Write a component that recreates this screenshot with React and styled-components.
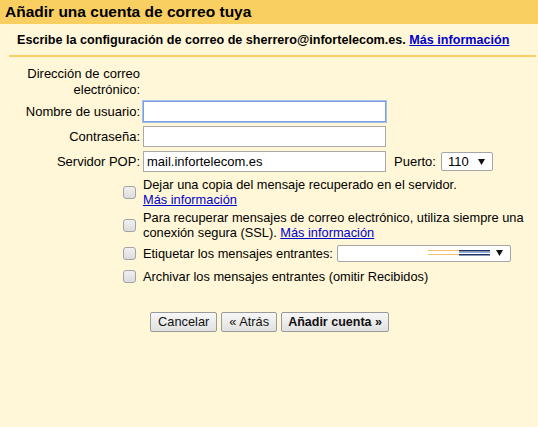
import React from "react";
import styled, { createGlobalStyle } from "styled-components";

const Global = createGlobalStyle`
  html, body { margin: 0; padding: 0; }
  body {
    background: #fff7d7;
    font-family: "Liberation Sans", Arial, sans-serif;
    font-size: 13px;
    color: #000;
  }
`;

const Page = styled.div`
  width: 538px;
  min-height: 427px;
  background: #fff7d7;
`;

const TitleBar = styled.div`
  height: 24px;
  background: #f9cf62;
  padding-left: 5px;
  font-weight: bold;
  font-size: 15.5px;
  line-height: 23px;
  color: #000;
`;

const SubHeader = styled.div`
  margin: 0 2px 0 9px;
  padding: 9px 0 7px 8px;
  border-bottom: 2px solid #f9cf62;
  font-weight: bold;
  font-size: 12.6px;
  line-height: 15px;
  white-space: nowrap;
`;

const Link = styled.a`
  color: #0000cc;
  text-decoration: underline;
  cursor: pointer;
`;

const FormGrid = styled.div`
  display: grid;
  grid-template-columns: 121px 1fr;
  row-gap: ${(p) => p.$gap}px;
  padding: ${(p) => p.$top}px 8px 0 22px;
`;

const Label = styled.div`
  text-align: right;
  padding-right: 3px;
  line-height: ${(p) => (p.$multi ? "15.5px" : "21px")};
`;

const Field = styled.div`
  display: flex;
  align-items: center;
  height: ${(p) => (p.$empty ? "auto" : "21px")};
`;

const TextInput = styled.input`
  box-sizing: border-box;
  width: 243px;
  height: 21px;
  margin: 0;
  padding: 1px 3px;
  border: 1px solid ${(p) => (p.$focused ? "#7b9fe0" : "#a9a9a9")};
  box-shadow: ${(p) => (p.$focused ? "0 0 0 1px #a7c1ee" : "none")};
  background: #fff;
  font-family: "Liberation Sans", Arial, sans-serif;
  font-size: 13px;
  color: #000;
  outline: none;
`;

const InlineLabel = styled.span`
  margin-left: 8px;
`;

const FakeSelect = styled.div`
  box-sizing: border-box;
  display: flex;
  align-items: center;
  justify-content: space-between;
  width: ${(p) => p.$w}px;
  height: ${(p) => p.$h}px;
  margin-left: ${(p) => p.$ml}px;
  padding: 0 7px 0 6px;
  border: 1px solid #a6a6a6;
  border-radius: 2px;
  background: #fff;
  font-size: 13px;
`;

const Arrow = () => (
  <svg width="7" height="6" viewBox="0 0 7 6">
    <path d="M0 0 H7 L3.5 6 Z" fill="#111" />
  </svg>
);

const Swatch = () => (
  <svg width="62" height="6" viewBox="0 0 62 6" style={{ marginLeft: "auto", marginRight: 6 }}>
    <rect x="0" y="0" width="31" height="1" fill="#f7bf6b" />
    <rect x="0" y="4" width="31" height="1" fill="#f7bf6b" />
    <rect x="31" y="0" width="31" height="1.5" fill="#1c3268" />
    <rect x="31" y="2" width="31" height="1" fill="#8fb1df" />
    <rect x="31" y="4" width="31" height="1.5" fill="#1c3268" />
  </svg>
);

const Check = styled.span`
  justify-self: end;
  align-self: center;
  box-sizing: border-box;
  width: 13px;
  height: 13px;
  margin-right: 7px;
  border: 1px solid #a3a3a3;
  border-radius: 3px;
  background: linear-gradient(#f0f0f0, #dcdcdc);
`;

const OptionText = styled.div`
  display: flex;
  align-items: center;
  min-height: 20px;
  font-size: 12.8px;
  line-height: 15px;
`;

const Buttons = styled.div`
  display: flex;
  justify-content: center;
  gap: 4px;
  margin-top: 26px;
  padding-left: 1px;
`;

const Button = styled.button`
  box-sizing: border-box;
  height: 20px;
  margin: 0;
  padding: 0 ${(p) => (p.$primary ? 6 : 7)}px;
  border: 1px solid #9a9a9a;
  border-radius: 2px;
  background: linear-gradient(#f7f7f7, #e1e1e1);
  font-family: "Liberation Sans", Arial, sans-serif;
  font-size: ${(p) => (p.$primary ? 12.5 : 12.8)}px;
  font-weight: ${(p) => (p.$primary ? "bold" : "normal")};
  color: #111;
  line-height: 18px;
`;

export default function App() {
  return (
    <Page>
      <Global />
      <TitleBar>Añadir una cuenta de correo tuya</TitleBar>
      <SubHeader>
        Escribe la configuración de correo de sherrero@infortelecom.es.{" "}
        <Link>Más información</Link>
      </SubHeader>

      <FormGrid $gap={4} $top={9}>
        <Label $multi>Dirección de correo electrónico:</Label>
        <Field $empty />

        <Label>Nombre de usuario:</Label>
        <Field>
          <TextInput $focused defaultValue="" />
        </Field>

        <Label>Contraseña:</Label>
        <Field>
          <TextInput type="password" defaultValue="" />
        </Field>

        <Label>Servidor POP:</Label>
        <Field>
          <TextInput defaultValue="mail.infortelecom.es" />
          <InlineLabel>Puerto:</InlineLabel>
          <FakeSelect $w={52} $h={19} $ml={5}>
            <span>110</span>
            <Arrow />
          </FakeSelect>
        </Field>
      </FormGrid>

      <FormGrid $gap={3} $top={5}>
        <Check />
        <OptionText>
          <div>
            Dejar una copia del mensaje recuperado en el servidor.
            <br />
            <Link>Más información</Link>
          </div>
        </OptionText>

        <Check />
        <OptionText>
          <div>
            Para recuperar mensajes de correo electrónico, utiliza siempre una
            conexión segura (SSL). <Link>Más información</Link>
          </div>
        </OptionText>

        <Check />
        <OptionText>
          Etiquetar los mensajes entrantes:
          <FakeSelect $w={174} $h={17} $ml={4}>
            <Swatch />
            <Arrow />
          </FakeSelect>
        </OptionText>

        <Check />
        <OptionText>Archivar los mensajes entrantes (omitir Recibidos)</OptionText>
      </FormGrid>

      <Buttons>
        <Button>Cancelar</Button>
        <Button>« Atrás</Button>
        <Button $primary>Añadir cuenta »</Button>
      </Buttons>
    </Page>
  );
}
